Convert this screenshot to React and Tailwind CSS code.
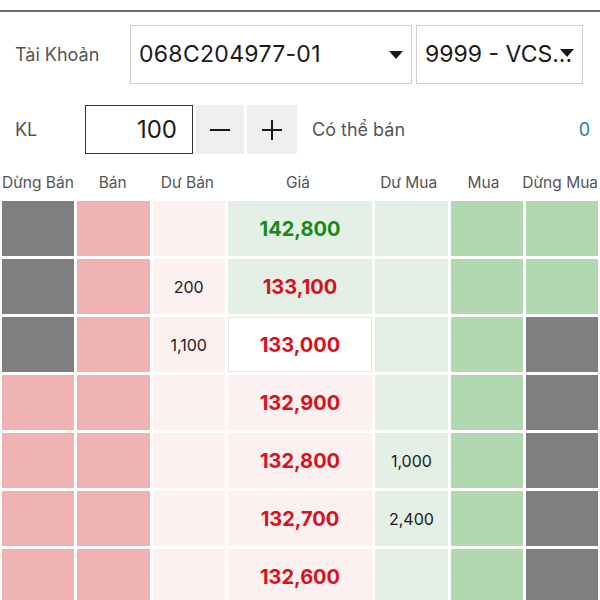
import React from "react";

const GRAY = "bg-[#7f7f7f]";
const PINK = "bg-[#f0b3b4]";
const LPINK = "bg-[#fdf0f0]";
const LGREEN = "bg-[#e4f0e5]";
const GREEN = "bg-[#b2d8b2]";

const rows = [
  { c1: GRAY, c3: "", price: "142,800", pc: "text-[#168a16]", pbg: LGREEN, dm: "", c7: GREEN },
  { c1: GRAY, c3: "200", price: "133,100", pc: "text-[#d8111c]", pbg: LGREEN, dm: "", c7: GREEN },
  { c1: GRAY, c3: "1,100", price: "133,000", pc: "text-[#d8111c]", pbg: "bg-white border border-[#e6e6e6]", dm: "", c7: GRAY },
  { c1: PINK, c3: "", price: "132,900", pc: "text-[#d8111c]", pbg: LPINK, dm: "", c7: GRAY },
  { c1: PINK, c3: "", price: "132,800", pc: "text-[#d8111c]", pbg: LPINK, dm: "1,000", c7: GRAY },
  { c1: PINK, c3: "", price: "132,700", pc: "text-[#d8111c]", pbg: LPINK, dm: "2,400", c7: GRAY },
  { c1: PINK, c3: "", price: "132,600", pc: "text-[#d8111c]", pbg: LPINK, dm: "", c7: GRAY },
];

function Arrow() {
  return (
    <svg width="14" height="8" viewBox="0 0 14 8" className="shrink-0">
      <path d="M0 0 L14 0 L7 8 Z" fill="#1a1a1a" />
    </svg>
  );
}

export default function App() {
  return (
    <div
      className="w-[600px] h-[600px] overflow-hidden bg-white text-[#1a1a1a]"
      style={{ fontFamily: "Inter, 'Noto Sans', sans-serif" }}
    >
      <div className="h-[10px]" />
      <div className="h-[2px] bg-[#6b6b6b]" />
      {/* account row */}
      <div className="flex items-center h-[59px] mt-[13px]">
        <div className="w-[130px] pl-[15px] text-[18px] text-[#555]">Tài Khoản</div>
        <div className="w-[282px] h-full border border-[#cfcfcf] flex items-center pl-[8px] pr-[8px]">
          <span className="flex-1 text-[23px] tracking-[0.3px]">068C204977-01</span>
          <Arrow />
        </div>
        <div className="w-[167px] h-full ml-[4px] border border-[#cfcfcf] flex items-center pl-[8px] pr-[8px] relative">
          <span className="flex-1 text-[23px] whitespace-nowrap">9999 - VCS...</span>
          <div className="absolute right-[8px] top-[23px]">
            <Arrow />
          </div>
        </div>
      </div>
      {/* KL row */}
      <div className="flex items-center h-[49px] mt-[21px]">
        <div className="w-[85px] pl-[15px] text-[18px] text-[#555]">KL</div>
        <div className="w-[108px] h-full border border-[#333] flex items-center justify-end pr-[15px] text-[24px]">
          100
        </div>
        <div className="w-[48px] h-full ml-[3px] bg-[#efefef] flex items-center justify-center">
          <svg width="22" height="22" viewBox="0 0 22 22"><path d="M1 11 H21" stroke="#1a1a1a" strokeWidth="2" /></svg>
        </div>
        <div className="w-[50px] h-full ml-[3px] bg-[#efefef] flex items-center justify-center">
          <svg width="22" height="22" viewBox="0 0 22 22"><path d="M1 11 H21 M11 1 V21" stroke="#1a1a1a" strokeWidth="2" /></svg>
        </div>
        <div className="ml-[15px] flex-1 text-[18px] text-[#555]">Có thể bán</div>
        <div className="pr-[10px] text-[18px] text-[#2a7db5]">0</div>
      </div>
      {/* header */}
      <div className="grid grid-cols-[1fr_1fr_1fr_2fr_1fr_1fr_1fr] gap-x-[3px] px-[2px] h-[47px] pt-[10px] items-center text-[15.5px] text-[#555] text-center whitespace-nowrap">
        <div className="flex justify-center"><span>Dừng Bán</span></div>
        <div>Bán</div>
        <div>Dư Bán</div>
        <div>Giá</div>
        <div>Dư Mua</div>
        <div>Mua</div>
        <div className="flex justify-center"><span>Dừng Mua</span></div>
      </div>
      {/* book */}
      <div className="grid grid-cols-[1fr_1fr_1fr_2fr_1fr_1fr_1fr] auto-rows-[55px] gap-x-[3px] gap-y-[3px] px-[2px]">
        {rows.map((r, i) => (
          <React.Fragment key={i}>
            <div className={r.c1} />
            <div className={PINK} />
            <div className={`${LPINK} flex items-center justify-center text-[16px]`}>{r.c3}</div>
            <div className={`${r.pbg} flex items-center justify-center text-[20px] font-bold ${r.pc}`}>{r.price}</div>
            <div className={`${LGREEN} flex items-center justify-center text-[16px]`}>{r.dm}</div>
            <div className={GREEN} />
            <div className={r.c7} />
          </React.Fragment>
        ))}
      </div>
    </div>
  );
}
